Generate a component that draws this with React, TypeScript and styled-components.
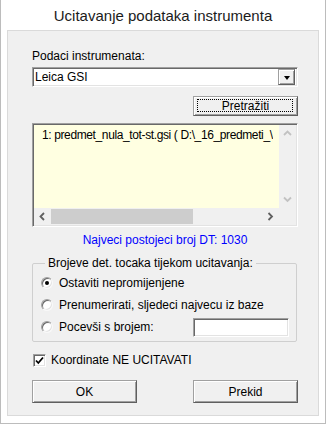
import React from 'react';
import styled, { createGlobalStyle, css } from 'styled-components';

const GlobalStyle = createGlobalStyle`
  html, body {
    margin: 0;
    padding: 0;
    background: #fff;
  }
  * {
    box-sizing: border-box;
  }
`;

const sunken = css`
  border: 1px solid;
  border-color: #a0a0a0 #fff #fff #a0a0a0;
  box-shadow: inset 1px 1px 0 #696969, inset -1px -1px 0 #e3e3e3;
  padding: 1px;
`;

const raised = css`
  border: 1px solid;
  border-color: #a0a0a0 #5f5f5f #5f5f5f #a0a0a0;
  box-shadow: inset 1px 1px 0 #fff, inset -1px -1px 0 #a0a0a0;
  background: #f0f0f0;
`;

const Window = styled.div`
  width: 326px;
  height: 424px;
  border: 1px solid #bcbcbc;
  border-top: 0;
  background: #fff;
  display: flex;
  flex-direction: column;
  font-family: 'Liberation Sans', Arial, sans-serif;
  font-size: 12px;
  color: #000;
`;

const TitleBar = styled.div`
  height: 30px;
  flex: none;
  display: flex;
  align-items: center;
  justify-content: center;
  font-size: 15px;
  color: #1b1b1b;
`;

const Panel = styled.div`
  flex: 1;
  margin: 0 6px 7px;
  border: 1px solid #dadada;
  background: #f0f0f0;
  padding: 18px 20px 11px 24px;
  display: flex;
  flex-direction: column;
`;

const FieldLabel = styled.div`
  line-height: 14px;
`;

const Combo = styled.div`
  ${sunken};
  margin-top: 4px;
  height: 20px;
  background: #fff;
  display: flex;
  align-items: center;
`;

const ComboText = styled.span`
  flex: 1;
  padding-left: 1px;
  line-height: 14px;
`;

const DropButton = styled.div`
  ${raised};
  width: 17px;
  height: 16px;
  margin-right: 1px;
  display: flex;
  align-items: center;
  justify-content: center;

  &::after {
    content: '';
    border-left: 3.5px solid transparent;
    border-right: 3.5px solid transparent;
    border-top: 4px solid #000;
    margin-top: 1px;
  }
`;

const ActionRow = styled.div<{ $gap: number }>`
  margin-top: ${(p) => p.$gap}px;
  display: flex;
  justify-content: ${(p) => (p.$gap > 10 ? 'space-between' : 'flex-end')};
`;

const PushButton = styled.button<{ $tall?: boolean; $focused?: boolean }>`
  ${raised};
  position: relative;
  width: 105px;
  height: ${(p) => (p.$tall ? 23 : 20)}px;
  padding: 0;
  font-family: inherit;
  font-size: 12px;
  color: #000;
  line-height: 14px;

  ${(p) =>
    p.$focused &&
    css`
      &::after {
        content: '';
        position: absolute;
        top: 2px;
        left: 3px;
        right: 4px;
        bottom: 3px;
        border: 1px dotted #000;
      }
    `}
`;

const ListBox = styled.div`
  ${sunken};
  margin-top: 7px;
  height: 104px;
  display: grid;
  grid-template-columns: 1fr 17px;
  grid-template-rows: 1fr 17px;
`;

const ListArea = styled.div`
  background: #ffffe1;
  padding: 3px 6px 0 8px;
  overflow: hidden;
  min-width: 0;
`;

const ListItem = styled.div`
  white-space: nowrap;
  overflow: hidden;
  line-height: 14px;
  letter-spacing: -0.38px;
`;

const ScrollTrack = styled.div<{ $vertical?: boolean }>`
  background: #f0f0f0;
  display: flex;
  flex-direction: ${(p) => (p.$vertical ? 'column' : 'row')};
  justify-content: space-between;
  align-items: center;
`;

const ScrollArrow = styled.div`
  width: 17px;
  height: 17px;
  flex: none;
  display: flex;
  align-items: center;
  justify-content: center;
`;

const Thumb = styled.div`
  width: 142px;
  height: 15px;
  background: #cdcdcd;
  margin-right: auto;
`;

const Corner = styled.div`
  background: #f0f0f0;
`;

const InfoText = styled.div`
  margin-top: 6px;
  line-height: 14px;
  text-align: center;
  color: #0000ff;
`;

const Group = styled.fieldset`
  margin: 9px 1px 0 0;
  padding: 2px 7px 3px 8px;
  border: 1px solid #cfcfcf;
  border-radius: 2px;
  min-width: 0;
`;

const Legend = styled.legend`
  padding: 0 3px;
  margin-left: 4px;
  line-height: 14px;
`;

const OptionRow = styled.label`
  height: 22px;
  display: flex;
  align-items: center;
  gap: 6px;
  line-height: 14px;
`;

const RadioCircle = styled.span<{ $checked?: boolean }>`
  width: 12px;
  height: 12px;
  flex: none;
  border-radius: 50%;
  background: #fff;
  border: 1px solid;
  border-color: #a0a0a0 #f8f8f8 #f8f8f8 #a0a0a0;
  box-shadow: inset 1px 1px 0 #696969, inset -1px -1px 0 #e3e3e3;
  display: flex;
  align-items: center;
  justify-content: center;

  &::after {
    content: '';
    width: 4px;
    height: 4px;
    border-radius: 50%;
    background: ${(p) => (p.$checked ? '#000' : 'transparent')};
  }
`;

const NumberInput = styled.div`
  ${sunken};
  width: 96px;
  height: 19px;
  margin-left: auto;
  background: #fff;
`;

const CheckRow = styled.label`
  margin-top: 11px;
  display: flex;
  align-items: center;
  gap: 5px;
  line-height: 14px;
  padding-left: 1px;
`;

const CheckBox = styled.span`
  ${sunken};
  width: 13px;
  height: 13px;
  flex: none;
  background: #fff;
  display: flex;
  align-items: center;
  justify-content: center;
  padding: 0;
`;

function Chevron({ dir, color }: { dir: 'up' | 'down' | 'left' | 'right'; color: string }) {
  const points = {
    up: '1,5 4.5,1.5 8,5',
    down: '1,1.5 4.5,5 8,1.5',
    left: '5,1 1.5,4.5 5,8',
    right: '1.5,1 5,4.5 1.5,8',
  }[dir];
  const vertical = dir === 'up' || dir === 'down';
  return (
    <svg width={vertical ? 9 : 7} height={vertical ? 7 : 9} viewBox={vertical ? '0 0 9 7' : '0 0 7 9'}>
      <polyline points={points} fill="none" stroke={color} strokeWidth="1.8" />
    </svg>
  );
}

export default function App() {
  return (
    <>
      <GlobalStyle />
      <Window>
        <TitleBar>Ucitavanje podataka instrumenta</TitleBar>
        <Panel>
          <FieldLabel>Podaci instrumenata:</FieldLabel>
          <Combo>
            <ComboText>Leica GSI</ComboText>
            <DropButton />
          </Combo>

          <ActionRow $gap={9}>
            <PushButton $focused>Pretražiti</PushButton>
          </ActionRow>

          <ListBox>
            <ListArea>
              <ListItem>1: predmet_nula_tot-st.gsi ( D:\_16_predmeti_\predmet_nula\tot-st.gsi )</ListItem>
            </ListArea>
            <ScrollTrack $vertical>
              <ScrollArrow>
                <Chevron dir="up" color="#c2c2c2" />
              </ScrollArrow>
              <ScrollArrow>
                <Chevron dir="down" color="#c2c2c2" />
              </ScrollArrow>
            </ScrollTrack>
            <ScrollTrack>
              <ScrollArrow>
                <Chevron dir="left" color="#606060" />
              </ScrollArrow>
              <Thumb />
              <ScrollArrow>
                <Chevron dir="right" color="#606060" />
              </ScrollArrow>
            </ScrollTrack>
            <Corner />
          </ListBox>

          <InfoText>Najveci postojeci broj DT: 1030</InfoText>

          <Group>
            <Legend>Brojeve det. tocaka tijekom ucitavanja:</Legend>
            <OptionRow>
              <RadioCircle $checked />
              Ostaviti nepromijenjene
            </OptionRow>
            <OptionRow>
              <RadioCircle />
              Prenumerirati, sljedeci najvecu iz baze
            </OptionRow>
            <OptionRow>
              <RadioCircle />
              Pocevši s brojem:
              <NumberInput />
            </OptionRow>
          </Group>

          <CheckRow>
            <CheckBox>
              <svg width="9" height="9" viewBox="0 0 9 9">
                <polyline points="1,4.5 3.3,7 8,1.5" fill="none" stroke="#000" strokeWidth="1.8" />
              </svg>
            </CheckBox>
            Koordinate NE UCITAVATI
          </CheckRow>

          <ActionRow $gap={13}>
            <PushButton $tall>OK</PushButton>
            <PushButton $tall>Prekid</PushButton>
          </ActionRow>
        </Panel>
      </Window>
    </>
  );
}
